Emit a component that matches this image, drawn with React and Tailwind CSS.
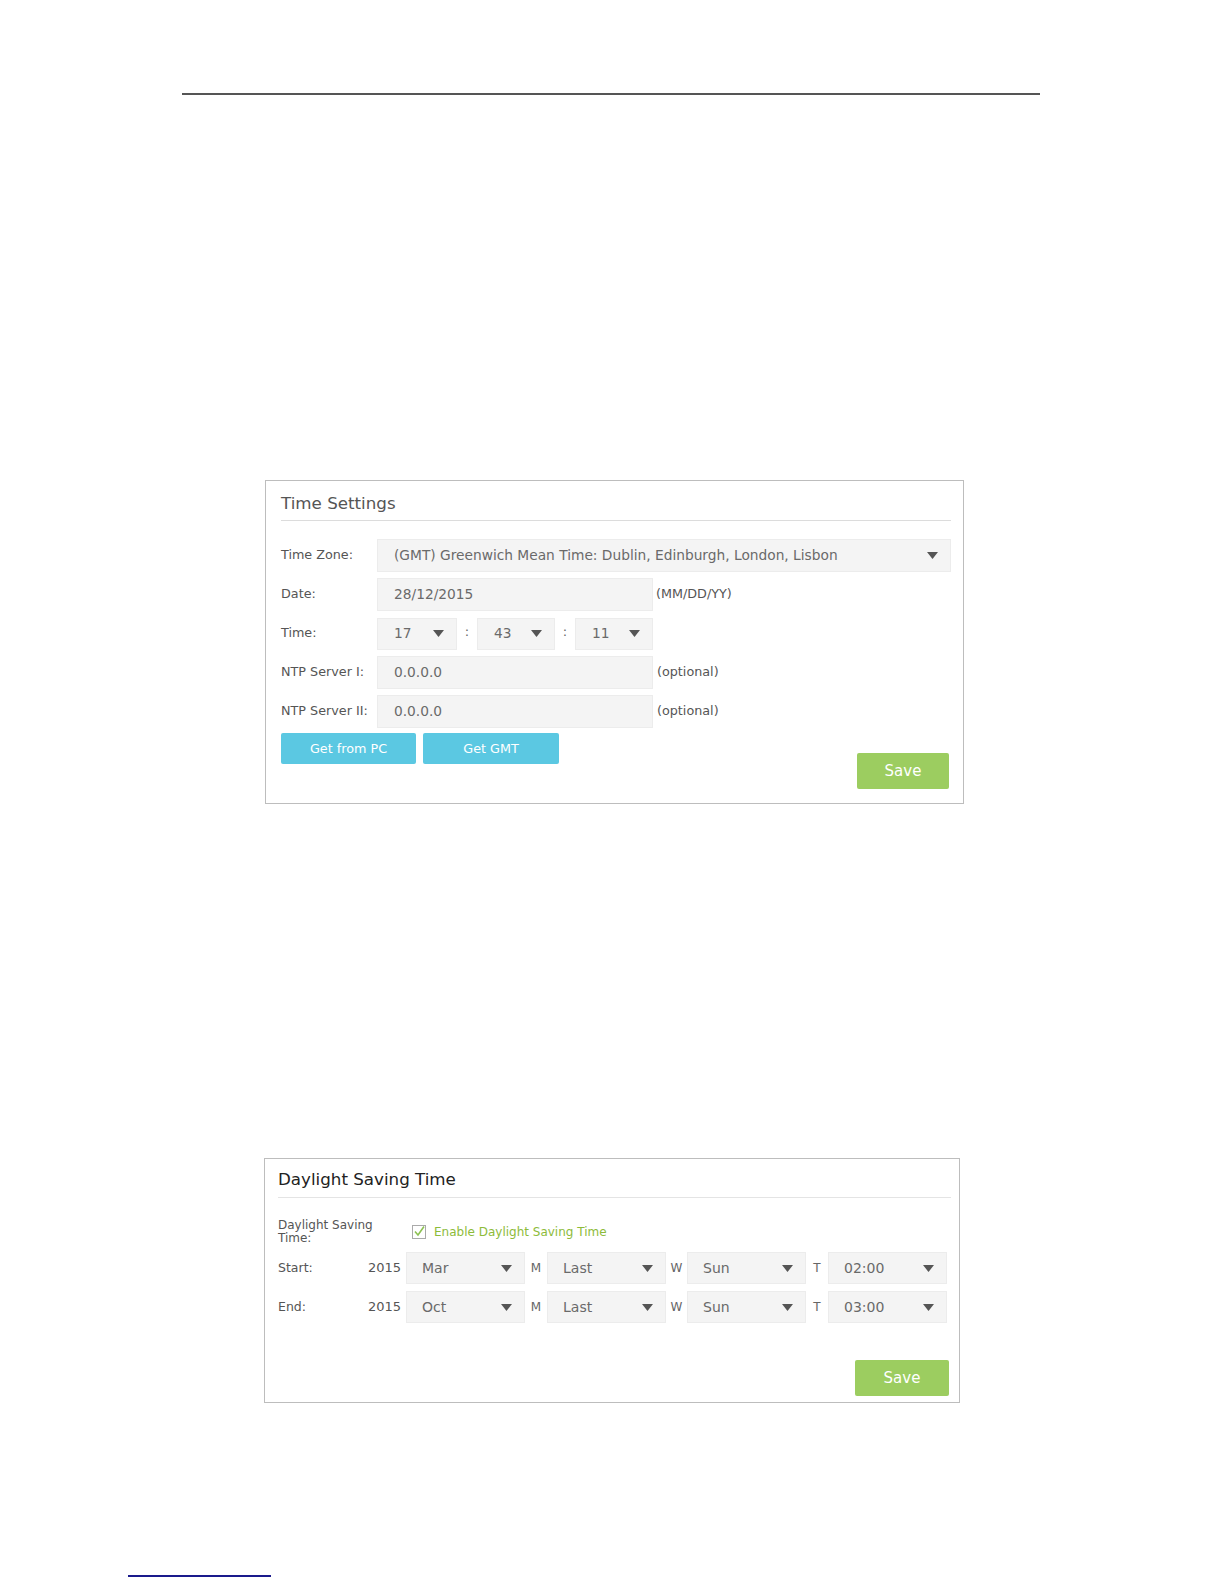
import React from "react";

const font = { fontFamily: '"DejaVu Sans", Verdana, sans-serif' };

function Arrow() {
  return (
    <svg width="11" height="7" viewBox="0 0 11 7" className="shrink-0">
      <path d="M0 0h11L5.5 7z" fill="#555" />
    </svg>
  );
}

function Select({ value, w, h = "h-[32px]", pl = "pl-4", pr = "pr-3", text = "text-[13.75px]" }) {
  return (
    <div className={`${w} ${h} ${pl} ${pr} flex items-center justify-between bg-[#f4f4f4] border border-[#ececec] ${text} text-[#6a6a6a]`}>
      <span>{value}</span>
      <Arrow />
    </div>
  );
}

function Input({ value }) {
  return (
    <div className="w-[276px] h-[33px] pl-4 flex items-center bg-[#f4f4f4] border border-[#ececec] text-[13.75px] text-[#6a6a6a]">
      {value}
    </div>
  );
}

function Row({ label, children }) {
  return (
    <div className="flex items-center h-[33px]">
      <div className="w-[96px] text-[12.75px] text-[#555] -mt-[2px]">{label}</div>
      {children}
    </div>
  );
}

function TimeSettings() {
  return (
    <div className="ml-[265px] w-[699px] h-[324px] border border-[#bdbdbd] pt-[10px] pl-[15px] pr-[12px]">
      <div className="text-[16.7px] leading-[24px] text-[#555] pb-[5px] border-b border-[#dcdcdc]">Time Settings</div>
      <div className="mt-[18px] flex flex-col gap-[6px]">
        <Row label="Time Zone:">
          <Select value="(GMT) Greenwich Mean Time: Dublin, Edinburgh, London, Lisbon" w="w-[574px]" h="h-[33px]" />
        </Row>
        <Row label="Date:">
          <Input value="28/12/2015" />
          <span className="ml-[3px] text-[12.75px] text-[#555] -mt-[2px]">(MM/DD/YY)</span>
        </Row>
        <Row label="Time:">
          <Select value="17" w="w-[80px]" />
          <span className="w-[20px] text-center text-[13px] text-[#666] -mt-[4px]">:</span>
          <Select value="43" w="w-[78px]" />
          <span className="w-[20px] text-center text-[13px] text-[#666] -mt-[4px]">:</span>
          <Select value="11" w="w-[78px]" />
        </Row>
        <Row label="NTP Server I:">
          <Input value="0.0.0.0" />
          <span className="ml-[4px] text-[12.75px] text-[#555] -mt-[2px]">(optional)</span>
        </Row>
        <Row label="NTP Server II:">
          <Input value="0.0.0.0" />
          <span className="ml-[4px] text-[12.75px] text-[#555] -mt-[2px]">(optional)</span>
        </Row>
      </div>
      <div className="mt-[5px] flex items-start justify-between">
        <div className="flex gap-[7px]">
          <button className="w-[135px] h-[31px] rounded-[2px] bg-[#5bc8e2] text-white text-[12.75px]">Get from PC</button>
          <button className="w-[136px] h-[31px] rounded-[2px] bg-[#5bc8e2] text-white text-[12.75px]">Get GMT</button>
        </div>
        <button className="mt-[20px] mr-[2px] w-[92px] h-[36px] rounded-[2px] bg-[#9ccd60] text-white text-[15px]">Save</button>
      </div>
    </div>
  );
}

function Letter({ c, w }) {
  return <span className={`${w} text-center text-[12px] text-[#666] -mt-[1px]`}>{c}</span>;
}

function DstRow({ label, month, time }) {
  return (
    <div className="flex items-center h-[32px]">
      <div className="w-[90px] text-[12.5px] text-[#555]">{label}</div>
      <div className="w-[38px] text-[13px] text-[#555] -mt-[1px]">2015</div>
      <Select value={month} w="w-[119px]" pl="pl-[15px]" text="text-[14px]" />
      <Letter c="M" w="w-[22px]" />
      <Select value="Last" w="w-[119px]" pl="pl-[15px]" text="text-[14px]" />
      <Letter c="W" w="w-[21px]" />
      <Select value="Sun" w="w-[119px]" pl="pl-[15px]" text="text-[14px]" />
      <Letter c="T" w="w-[22px]" />
      <Select value={time} w="w-[119px]" pl="pl-[15px]" text="text-[14px]" />
    </div>
  );
}

function DaylightSaving() {
  return (
    <div className="ml-[264px] w-[696px] h-[245px] border border-[#bdbdbd] pt-[7px] pl-[13px] pr-[8px]">
      <div className="text-[16.7px] leading-[26px] text-[#222] pb-[5px] border-b border-[#e4e4e4]">Daylight Saving Time</div>
      <div className="mt-[21px] flex items-center">
        <div className="w-[134px] text-[12px] leading-[13px] text-[#555]">
          Daylight Saving
          <br />
          Time:
        </div>
        <div className="flex items-center gap-[8px]">
          <svg width="14" height="14" viewBox="0 0 14 14">
            <rect x="0.5" y="0.5" width="13" height="13" fill="#fff" stroke="#aaa" />
            <path d="M3 6.5l3 3.5 6-8.5" fill="none" stroke="#8cc152" strokeWidth="1.6" />
          </svg>
          <span className="text-[12px] text-[#8dbb3a]">Enable Daylight Saving Time</span>
        </div>
      </div>
      <div className="mt-[7px] flex flex-col gap-[7px]">
        <DstRow label="Start:" month="Mar" time="02:00" />
        <DstRow label="End:" month="Oct" time="03:00" />
      </div>
      <div className="mt-[37px] flex justify-end">
        <button className="mr-[2px] w-[94px] h-[36px] rounded-[2px] bg-[#9ccd60] text-white text-[15px]">Save</button>
      </div>
    </div>
  );
}

export default function App() {
  return (
    <div className="w-full min-h-screen bg-white" style={font}>
      <div className="pt-[93px]">
        <div className="ml-[182px] w-[858px] h-[2px] bg-[#555]" />
      </div>
      <div className="mt-[385px]">
        <TimeSettings />
      </div>
      <div className="mt-[354px]">
        <DaylightSaving />
      </div>
      <div className="mt-[172px] ml-[128px] w-[143px] h-[2px] bg-[#1a1a8c]" />
    </div>
  );
}
